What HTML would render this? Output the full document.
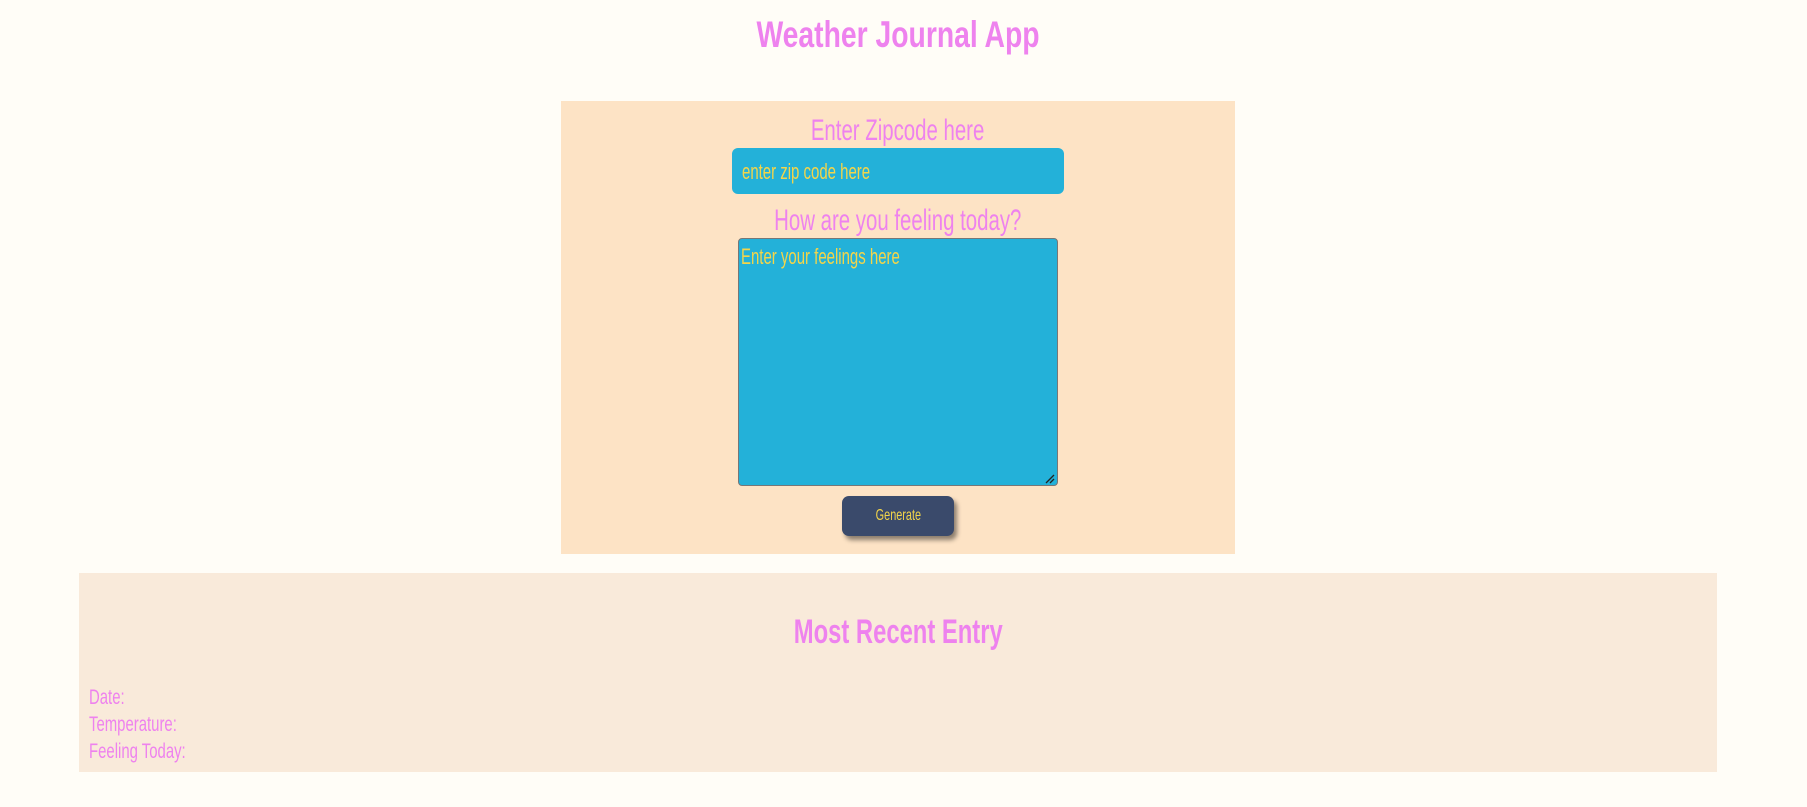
<!DOCTYPE html>
<html><head><meta charset="utf-8"><style>
html,body{margin:0;padding:0;background:#fffdf7;width:1807px;height:807px;overflow:hidden;font-family:"Liberation Sans",sans-serif;color:#ee82ee}
.a{position:absolute}
.c{position:absolute;left:0;width:1796px;text-align:center;white-space:nowrap}
.s{display:inline-block;transform:scaleX(.68);transform-origin:center}
.l{display:inline-block;transform:scaleX(.71);transform-origin:left;white-space:nowrap}
</style></head><body>
<div class="c" style="top:14px;font-size:37px;font-weight:bold;"><span class="s" style="transform:scaleX(.765)">Weather Journal App</span></div>
<div class="a" style="left:561px;top:101px;width:674px;height:453px;background:#fde3c5"></div>
<div class="c" style="top:114px;font-size:30px"><span class="s">Enter Zipcode here</span></div>
<div class="a" style="left:732px;top:148px;width:332px;height:46px;background:#23b1d9;border-radius:6px"></div>
<div class="a" style="left:742px;top:159px;font-size:22px;color:#f3d54a"><span class="l" style="transform:scaleX(.68)">enter zip code here</span></div>
<div class="c" style="top:204px;font-size:30px"><span class="s">How are you feeling today?</span></div>
<div class="a" style="left:738px;top:238px;width:318px;height:246px;background:#23b1d9;border:1px solid #777;border-radius:4px"></div>
<svg class="a" style="left:1045px;top:474px" width="10" height="10"><path d="M1 9L9 1M5 9L9 5" stroke="#222" stroke-width="1.3"/></svg>
<div class="a" style="left:741px;top:244px;font-size:22px;color:#f3d54a"><span class="l" style="transform:scaleX(.68)">Enter your feelings here</span></div>
<div class="a" style="left:842px;top:496px;width:112px;height:40px;background:#3a4a6b;border-radius:7px;box-shadow:3px 4px 5px rgba(0,0,0,.45);text-align:center;line-height:40px;font-size:16px;color:#f3d54a"><span class="s">Generate</span></div>
<div class="a" style="left:79px;top:573px;width:1638px;height:199px;background:#f9eada"></div>
<div class="c" style="top:613px;font-size:34px;font-weight:bold"><span class="s" style="transform:scaleX(.7)">Most Recent Entry</span></div>
<div class="a" style="left:89px;top:684px;font-size:21px;line-height:27px"><span class="l">Date:</span><br><span class="l">Temperature:</span><br><span class="l">Feeling Today:</span></div>
</body></html>
